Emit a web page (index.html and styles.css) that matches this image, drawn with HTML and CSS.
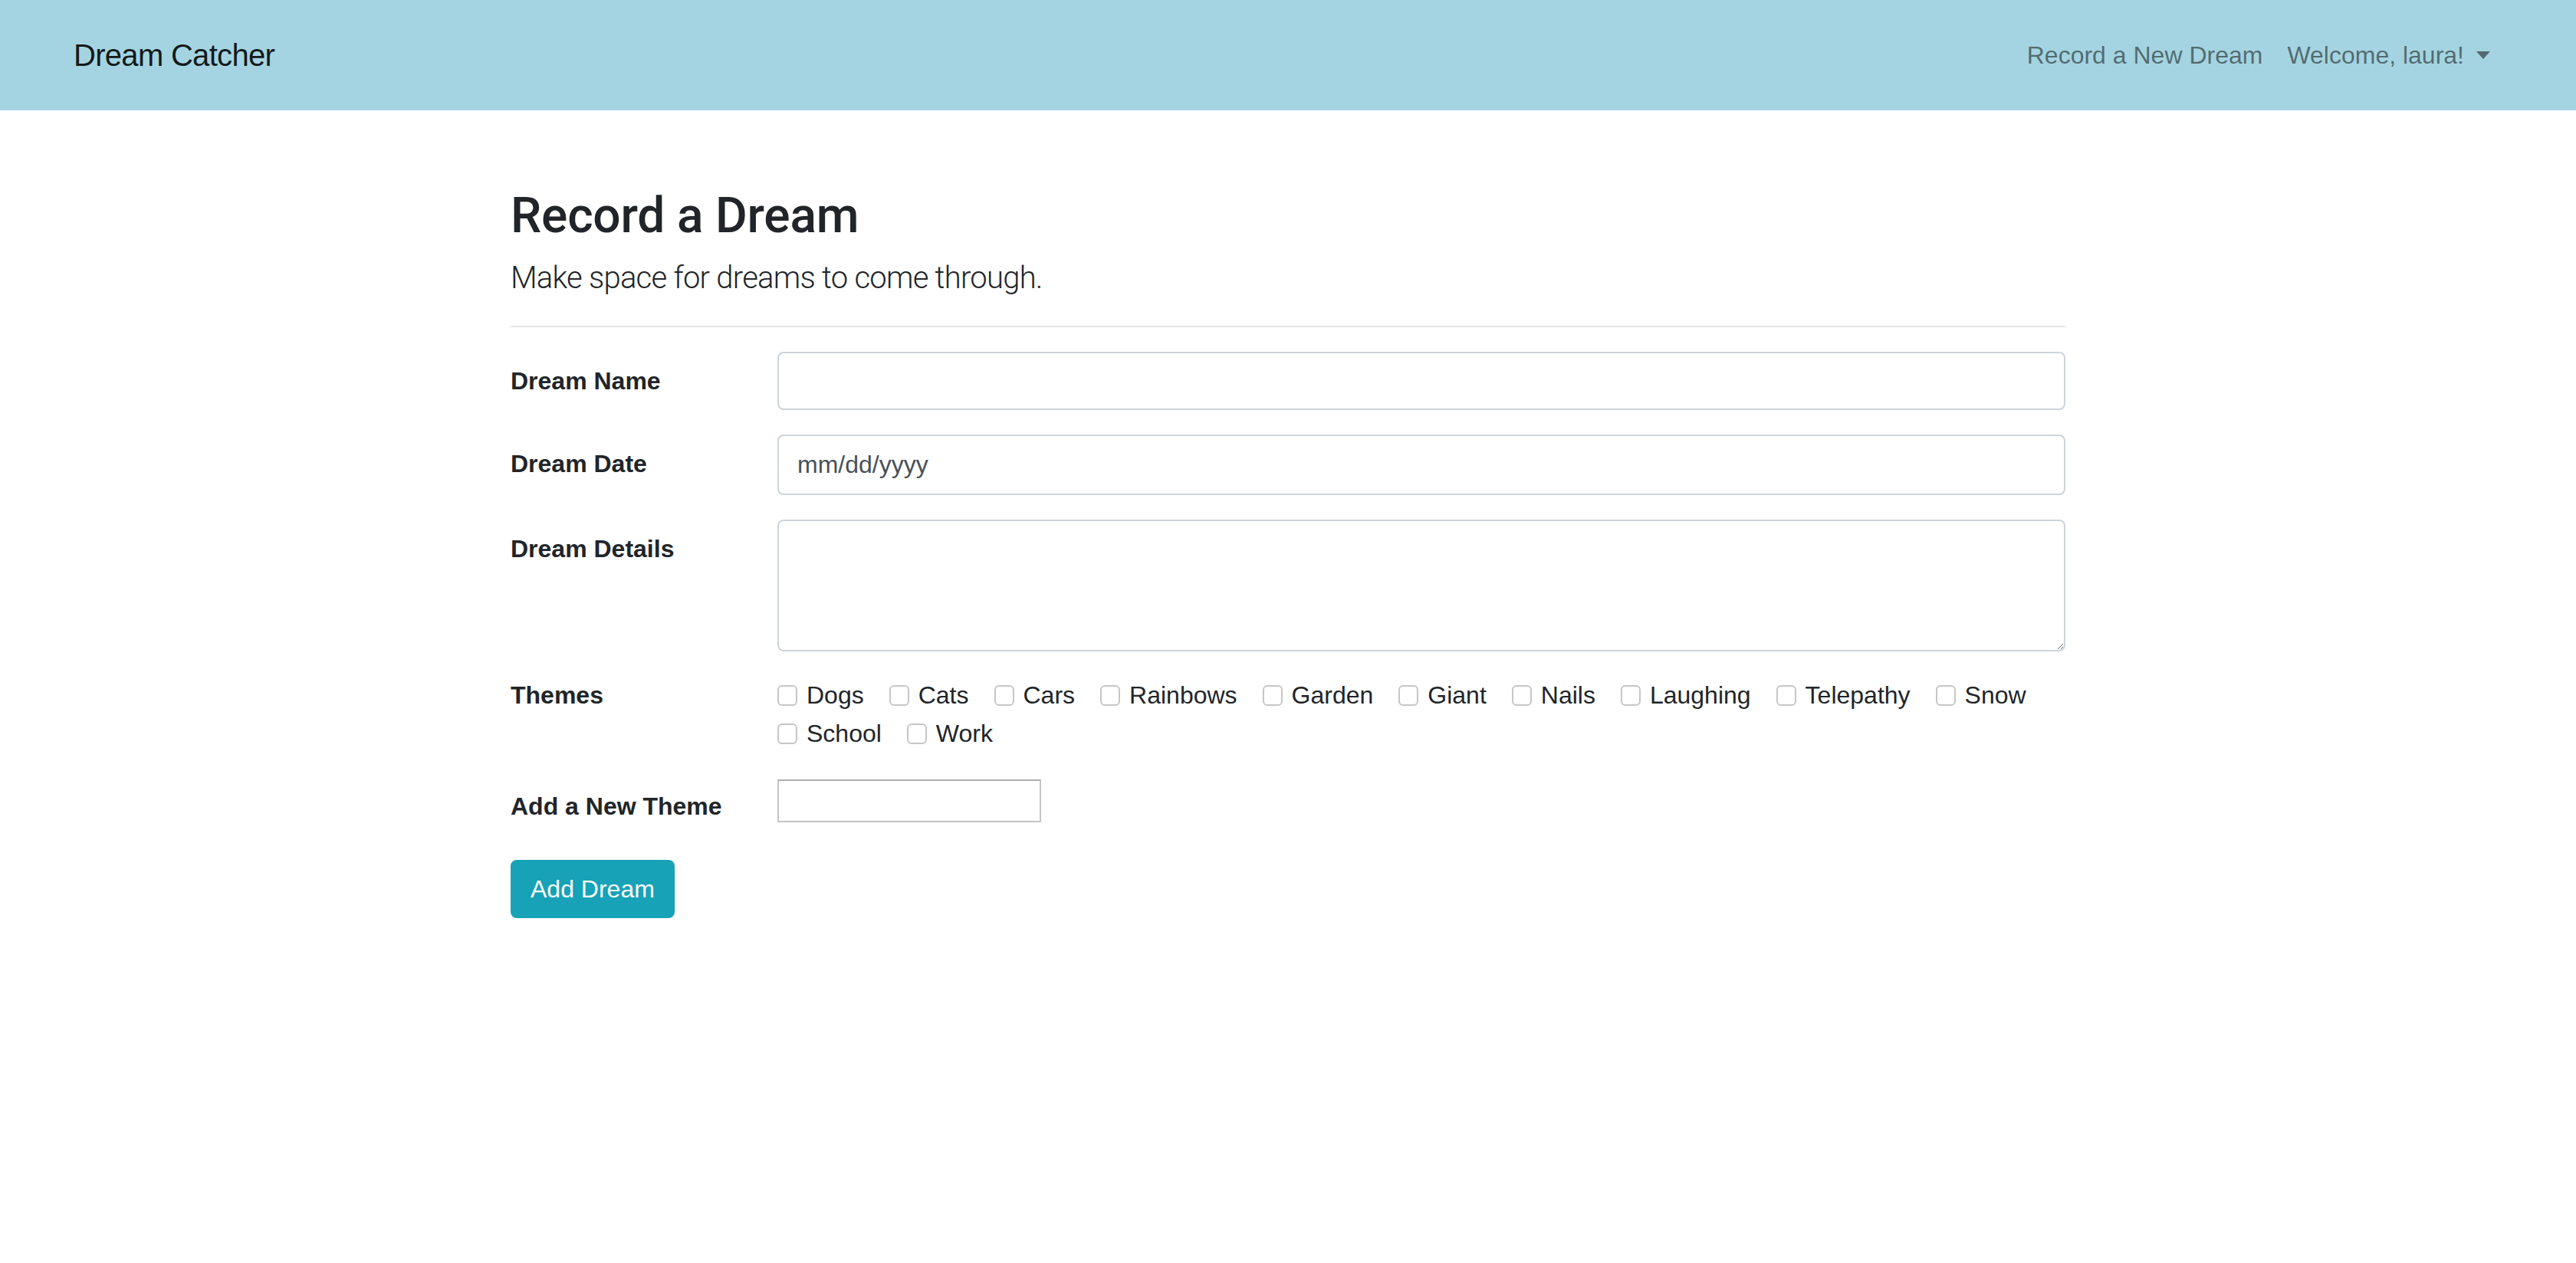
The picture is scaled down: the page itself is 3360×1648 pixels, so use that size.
FILE: index.html
```html
<!DOCTYPE html>
<html lang="en">
<head>
<meta charset="utf-8">
<title>Dream Catcher</title>
<link rel="stylesheet" href="styles.css">
</head>
<body>
<nav class="navbar">
  <a class="brand" href="#">Dream Catcher</a>
  <ul class="nav">
    <li><a class="nav-link" href="#">Record a New Dream</a></li>
    <li><a class="nav-link" href="#">Welcome, laura!<span class="caret"></span></a></li>
  </ul>
</nav>
<main class="container">
  <h1 class="title">Record a Dream</h1>
  <p class="lead">Make space for dreams to come through.</p>
  <hr class="divider">
  <form class="dream-form">
    <div class="form-row">
      <label class="col-label" for="name">Dream Name</label>
      <div class="field"><input class="form-control" id="name" type="text"></div>
    </div>
    <div class="form-row">
      <label class="col-label" for="date">Dream Date</label>
      <div class="field"><input class="form-control date" id="date" type="text" value="mm/dd/yyyy"></div>
    </div>
    <div class="form-row">
      <label class="col-label" for="details">Dream Details</label>
      <div class="field"><textarea class="form-control details" id="details" rows="3"></textarea></div>
    </div>
    <div class="form-row">
      <label class="col-label plain">Themes</label>
      <div class="themes">
        <label class="theme"><input type="checkbox">Dogs</label>
        <label class="theme"><input type="checkbox">Cats</label>
        <label class="theme"><input type="checkbox">Cars</label>
        <label class="theme"><input type="checkbox">Rainbows</label>
        <label class="theme"><input type="checkbox">Garden</label>
        <label class="theme"><input type="checkbox">Giant</label>
        <label class="theme"><input type="checkbox">Nails</label>
        <label class="theme"><input type="checkbox">Laughing</label>
        <label class="theme"><input type="checkbox">Telepathy</label>
        <label class="theme"><input type="checkbox">Snow</label>
        <label class="theme"><input type="checkbox">School</label>
        <label class="theme"><input type="checkbox">Work</label>
      </div>
    </div>
    <div class="form-row">
      <label class="col-label" for="newtheme">Add a New Theme</label>
      <div class="field"><input class="theme-input" id="newtheme" type="text"></div>
    </div>
    <button class="btn" type="button">Add Dream</button>
  </form>
</main>
</body>
</html>
```

FILE: styles.css
```css
* {
  box-sizing: border-box;
}

html,
body {
  margin: 0;
  padding: 0;
}

body {
  font-family: "Liberation Sans", Arial, sans-serif;
  font-size: 32px;
  line-height: 48px;
  color: #212529;
  background: #ffffff;
}

.navbar {
  height: 144px;
  background: #a4d4e1;
  display: flex;
  align-items: center;
  justify-content: space-between;
  padding: 0 96px;
}

.brand {
  font-size: 40px;
  line-height: 60px;
  color: rgba(0, 0, 0, 0.9);
  letter-spacing: -0.7px;
  text-decoration: none;
}

.nav {
  display: flex;
  list-style: none;
  margin: 0;
  padding: 0;
}

.nav-link {
  display: flex;
  align-items: center;
  padding: 16px;
  line-height: 48px;
  color: rgba(0, 0, 0, 0.5);
  text-decoration: none;
}

.caret {
  margin-left: 16px;
  width: 0;
  height: 0;
  border-top: 10px solid rgba(0, 0, 0, 0.5);
  border-left: 9.6px solid transparent;
  border-right: 9.6px solid transparent;
}

.container {
  width: 2028px;
  margin: 0 auto;
  padding-top: 100px;
}

.title {
  font-family: Roboto, "Liberation Sans", sans-serif;
  font-weight: 500;
  font-size: 64px;
  line-height: 76.8px;
  letter-spacing: -0.2px;
  margin: 0 0 12px;
}

.lead {
  font-family: Roboto, "Liberation Sans", sans-serif;
  font-weight: 300;
  font-size: 40px;
  line-height: 60px;
  letter-spacing: -0.75px;
  margin: 0 0 32px;
}

.divider {
  border: 0;
  border-top: 2px solid rgba(0, 0, 0, 0.1);
  margin: 0 0 32px;
  height: 0;
}

.form-row {
  display: grid;
  grid-template-columns: 288px 1fr;
  column-gap: 60px;
  margin-bottom: 32px;
}

.col-label {
  font-weight: bold;
  padding: 14px 0;
}

.col-label.plain {
  padding: 0;
  line-height: 50px;
}

.form-control {
  display: block;
  width: 100%;
  height: 76px;
  padding: 12px 24px;
  font-family: inherit;
  font-size: 32px;
  line-height: 48px;
  color: #495057;
  background: #ffffff;
  border: 2px solid #ced4da;
  border-radius: 8px;
  outline: none;
}

.form-control.date {
  height: 79px;
}

.form-control.details {
  height: 172px;
  resize: vertical;
}

.themes {
  display: flex;
  flex-wrap: wrap;
  column-gap: 33px;
}

.theme {
  display: inline-flex;
  align-items: center;
  height: 50px;
  line-height: 50px;
}

.theme input {
  appearance: none;
  -webkit-appearance: none;
  width: 26px;
  height: 27px;
  margin: 2px 12px 0 0;
  border: 2px solid #c6c6c6;
  border-radius: 6px;
  background: #ffffff;
}

.theme-input {
  display: block;
  width: 344px;
  height: 56px;
  margin-top: 3px;
  border: 2px solid #c4c4c4;
  border-top-color: #b0b0b0;
  border-radius: 0;
  background: #ffffff;
  font-family: inherit;
  font-size: 26px;
  outline: none;
}

.btn {
  display: inline-block;
  height: 76px;
  padding: 12px 24px;
  font-family: inherit;
  font-size: 32px;
  line-height: 48px;
  color: #ffffff;
  background: #17a2b8;
  border: 2px solid #17a2b8;
  border-radius: 8px;
  cursor: pointer;
}
```
